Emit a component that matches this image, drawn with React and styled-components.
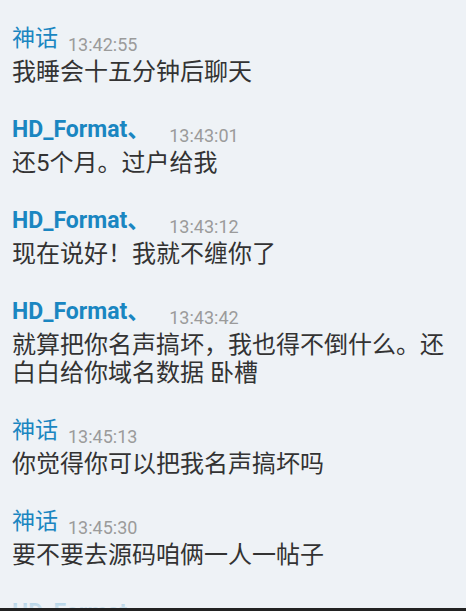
import React from 'react';
import styled, { createGlobalStyle } from 'styled-components';

const GlobalStyle = createGlobalStyle`
  html, body {
    margin: 0;
    padding: 0;
    background: #eef2f6;
  }
`;

const Screen = styled.div`
  display: flex;
  flex-direction: column;
  width: 466px;
  height: 611px;
  background: #eef2f6;
  font-family: Roboto, "Noto Sans CJK SC", sans-serif;
  overflow: hidden;
`;

const List = styled.div`
  position: relative;
  flex: 1;
  overflow: hidden;
  padding: 20px 12px 0;

  &::after {
    content: '';
    position: absolute;
    left: 0;
    right: 0;
    bottom: 0;
    height: 14px;
    background: linear-gradient(rgba(238, 242, 246, 0.55), rgba(238, 242, 246, 0.85));
  }
`;

const Message = styled.div`
  margin-bottom: 25px;
`;

const NameRow = styled.div`
  display: flex;
  align-items: flex-end;
  height: 34px;
  padding-bottom: 4px;
  white-space: nowrap;
`;

const Name = styled.span`
  font-size: 23px;
  line-height: 30px;
  color: #1a86c1;
  font-weight: ${(p) => (p.$bold ? 700 : 400)};
`;

const Time = styled.span`
  margin-left: ${(p) => p.$gap || 10}px;
  font-size: 18px;
  line-height: 18px;
  color: #9b9b9b;
`;

const Body = styled.div`
  font-size: 24px;
  line-height: 28px;
  color: #333;
`;

const BottomBar = styled.div`
  height: 3px;
  flex-shrink: 0;
  background: #222;
`;

const messages = [
  { name: '神话', time: '13:42:55', text: '我睡会十五分钟后聊天' },
  { name: 'HD_Format、', bold: true, time: '13:43:01', text: '还5个月。过户给我' },
  { name: 'HD_Format、', bold: true, time: '13:43:12', text: '现在说好！我就不缠你了' },
  {
    name: 'HD_Format、',
    bold: true,
    time: '13:43:42',
    text: '就算把你名声搞坏，我也得不倒什么。还白白给你域名数据 卧槽',
  },
  { name: '神话', time: '13:45:13', text: '你觉得你可以把我名声搞坏吗' },
  { name: '神话', time: '13:45:30', text: '要不要去源码咱俩一人一帖子' },
  { name: 'HD_Format、', bold: true, time: '13:46:02', text: '' },
];

export default function App() {
  return (
    <Screen>
      <GlobalStyle />
      <List>
        {messages.map((m, i) => (
          <Message key={i}>
            <NameRow>
              <Name $bold={m.bold}>{m.name}</Name>
              <Time $gap={m.bold ? 19 : 10}>{m.time}</Time>
            </NameRow>
            <Body>{m.text}</Body>
          </Message>
        ))}
      </List>
      <BottomBar />
    </Screen>
  );
}
